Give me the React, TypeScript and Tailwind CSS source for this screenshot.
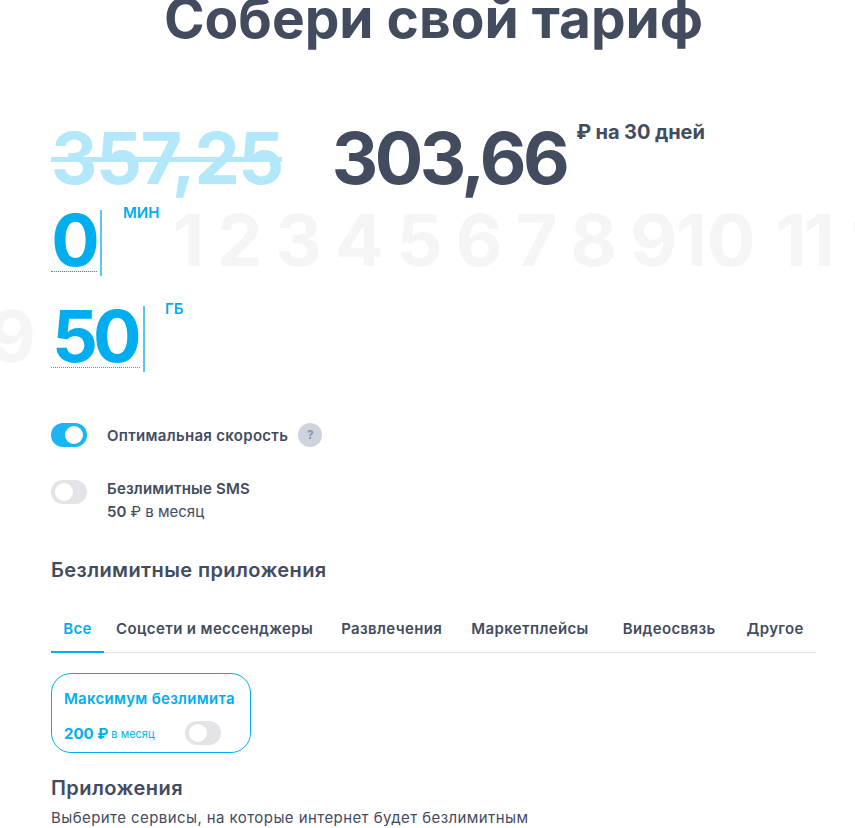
const font = "[font-family:Inter,'Noto_Sans',sans-serif]";

function Toggle({ on }: { on?: boolean }) {
  return (
    <span className={`flex h-6 w-9 shrink-0 items-center rounded-full p-1 ${on ? "justify-end bg-[#1ab5f3]" : "justify-start bg-[#e2e4e8]"}`}>
      <span className="size-[18px] rounded-full bg-white" />
    </span>
  );
}

function Ghost({ children, className = "tracking-[-3px]" }: { children: string; className?: string }) {
  return (
    <span className={`shrink-0 text-[72px] leading-[60px] font-bold text-[#f5f5f5] ${className}`}>
      {children}
    </span>
  );
}

const tabs: [string, string][] = [
  ["Соцсети и мессенджеры", "ml-[12px]"],
  ["Развлечения", "ml-[28px]"],
  ["Маркетплейсы", "ml-[29px]"],
  ["Видеосвязь", "ml-[34px]"],
  ["Другое", "ml-[31px]"],
];

const ghosts: [string, string][] = [
  ["1", "tracking-[-3px]"], ["2", "tracking-[-3px]"], ["3", "tracking-[-3px]"], ["4", "tracking-[-3px]"],
  ["5", "tracking-[-3px]"], ["6", "tracking-[-3px]"], ["7", "tracking-[-3px]"], ["8", "tracking-[-3px]"],
  ["9", "tracking-[-3px]"],
  ["10", "-ml-[14px] tracking-[0px]"], ["11", "ml-[4px] tracking-[-3px]"], ["12", "ml-[3px] tracking-[-3px]"],
];

export default function App() {
  return (
    <div className={`h-[828px] w-[855px] overflow-hidden bg-white text-[#434c5e] ${font}`}>
      <h1 className="-mt-[16px] ml-[51px] w-[765px] text-center text-[55px] leading-[68px] font-bold">Собери свой тариф</h1>

      <div className="mt-[70px] ml-[51px] flex items-start">
        <span className="relative text-[72px] leading-[72px] font-bold tracking-[-1.5px] text-[#b3e7fa]">
          357,25
          <span className="absolute top-[35px] left-0 h-[5px] w-[231px] bg-[#b3e7fa]" />
        </span>
        <span className="ml-[49px] text-[72px] leading-[72px] font-bold tracking-[-3.5px]">303,66</span>
        <span className="mt-[-4px] ml-[10px] text-xl leading-7 font-bold tracking-[-0.1px]">₽ на 30 дней</span>
      </div>

      <div className="mt-[11px] flex h-[71px] items-start overflow-hidden pt-[5px] pl-[51px]">
        <span className="h-[62px] w-[46px] shrink-0 border-b border-dotted border-[#00aeef] text-center text-[72px] leading-[60px] font-bold tracking-[-3px] text-[#00aeef]">0</span>
        <span className="ml-[3px] h-[66px] w-0.5 shrink-0 bg-[#5cc8f2]" />
        <span className="-mt-[3px] ml-[21px] w-[50px] shrink-0 text-[15px] leading-3 font-semibold text-[#00aeef]">МИН</span>
        <div className="flex gap-4">
          {ghosts.map(([n, m]) => (
            <Ghost key={n} className={m}>{n}</Ghost>
          ))}
        </div>
      </div>

      <div className="mt-[25px] flex h-[71px] items-start overflow-hidden pt-[5px]">
        <div className="-ml-[11px] w-[62px] shrink-0"><Ghost>9</Ghost></div>
        <span className="h-[62px] w-[89px] shrink-0 border-b border-dotted border-[#00aeef] pl-px text-[72px] leading-[60px] font-bold tracking-[-5px] text-[#00aeef]">50</span>
        <span className="ml-[3px] h-[66px] w-0.5 shrink-0 bg-[#5cc8f2]" />
        <span className="-mt-[3px] ml-[20px] text-[15px] leading-3 font-semibold text-[#00aeef]">ГБ</span>
      </div>

      <div className="mt-[51px] ml-[51px] flex items-center">
        <Toggle on />
        <span className="ml-5 pt-0.5 text-[15px] leading-5 font-semibold tracking-[0.3px]">Оптимальная скорость</span>
        <span className="ml-[10px] flex size-6 items-center justify-center rounded-full bg-[#ced3de] text-xs font-bold text-[#8b93a5]">?</span>
      </div>

      <div className="mt-[32px] ml-[51px] flex items-start">
        <div className="mt-px"><Toggle /></div>
        <div className="ml-5">
          <div className="text-[15px] leading-5 font-semibold tracking-[0.2px]">Безлимитные SMS</div>
          <div className="mt-[3px] text-[15px] leading-5"><b className="font-semibold">50</b> ₽ в месяц</div>
        </div>
      </div>

      <h2 className="mt-[34px] ml-[51px] text-xl leading-7 font-semibold tracking-[0.4px]">Безлимитные приложения</h2>

      <div className="mt-[30px] ml-[51px] flex h-[39px] w-[765px] border-b border-[#e2e4e8] text-[15px] font-semibold tracking-[0.37px]">
        <span className="-mb-px flex h-[39px] w-[53px] items-start justify-center border-b-2 border-[#00aeef] pt-[5px] leading-5 text-[#00aeef]">Все</span>
        <div className="flex pt-[5px] leading-5">
          {tabs.map(([t, m]) => <span key={t} className={m}>{t}</span>)}
        </div>
      </div>

      <div className="mt-5 ml-[51px] h-20 w-[200px] rounded-[20px] border border-[#00aeef] px-3 pt-[15px] text-[#00aeef]">
        <div className="text-[15px] leading-5 font-semibold tracking-[0.28px]">Максимум безлимита</div>
        <div className="mt-[14px] flex h-5 items-center">
          <span className="pt-0.5 text-[15px] leading-5 font-bold">200 ₽</span>
          <span className="ml-[3px] pt-0.5 text-[11px] leading-5">в месяц</span>
          <span className="mr-[17px] ml-auto"><Toggle /></span>
        </div>
      </div>

      <h2 className="mt-[21px] ml-[51px] text-xl leading-7 font-semibold tracking-[0.45px]">Приложения</h2>
      <p className="mt-[6px] ml-[51px] text-[15px] leading-5 tracking-[0.42px]">Выберите сервисы, на которые интернет будет безлимитным</p>
    </div>
  );
}
